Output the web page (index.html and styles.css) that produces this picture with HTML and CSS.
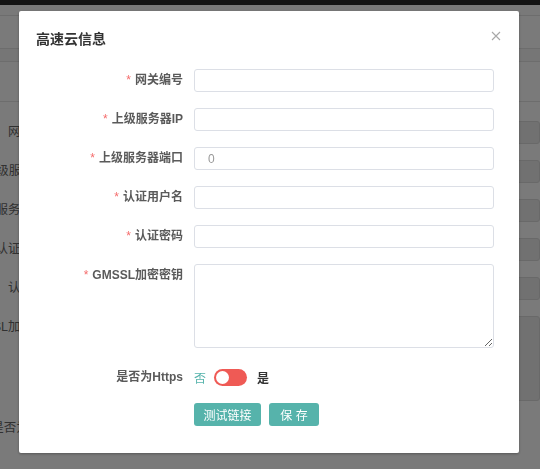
FILE: index.html
```html
<!DOCTYPE html>
<html lang="zh-CN">
<head>
    <meta charset="UTF-8">
    <meta name="viewport" content="width=device-width, initial-scale=1.0">
    <title>高速云信息</title>
    <link rel="stylesheet" href="styles.css">
</head>
<body>
    <!-- page behind the dialog -->
    <div class="page">
        <div class="topbar"></div>
        <div class="nav"></div>
        <div class="toolbar"></div>
        <div class="band"></div>
        <div class="panel-head"></div>
        <div class="bg-form">
            <div class="bg-row"><span class="bg-label"><span>网关编号</span></span><span class="bg-input"></span></div>
            <div class="bg-row"><span class="bg-label"><span>上级服务器IP</span></span><span class="bg-input"></span></div>
            <div class="bg-row"><span class="bg-label"><span>上级服务器端口</span></span><span class="bg-input"></span></div>
            <div class="bg-row"><span class="bg-label"><span>认证用户名</span></span><span class="bg-input"></span></div>
            <div class="bg-row"><span class="bg-label"><span>认证密码</span></span><span class="bg-input"></span></div>
            <div class="bg-row"><span class="bg-label"><span>GMSSL加密密钥</span></span><span class="bg-input bg-area"></span></div>
            <div class="bg-row bg-last"><span class="bg-label"><span>是否为Https</span></span></div>
        </div>
    </div>

    <div class="mask">
        <div class="dialog">
            <div class="dialog-head">
                <span class="dialog-title">高速云信息</span>
                <span class="dialog-close">
                    <svg width="10" height="10" viewBox="0 0 10 10">
                        <path d="M1 1 L9 9 M9 1 L1 9" stroke="#a8a8a8" stroke-width="1.1" fill="none"/>
                    </svg>
                </span>
            </div>
            <form class="dialog-body">
                <div class="row">
                    <label class="label required" for="gwNo">网关编号</label>
                    <input class="input" type="text" id="gwNo">
                </div>
                <div class="row">
                    <label class="label required" for="serverIp">上级服务器IP</label>
                    <input class="input" type="text" id="serverIp">
                </div>
                <div class="row">
                    <label class="label required" for="serverPort">上级服务器端口</label>
                    <input class="input" type="text" id="serverPort" placeholder="0">
                </div>
                <div class="row">
                    <label class="label required" for="authUser">认证用户名</label>
                    <input class="input" type="text" id="authUser">
                </div>
                <div class="row">
                    <label class="label required" for="authPwd">认证密码</label>
                    <input class="input" type="text" id="authPwd">
                </div>
                <div class="row">
                    <label class="label required" for="gmsslKey">GMSSL加密密钥</label>
                    <textarea class="input textarea" id="gmsslKey"></textarea>
                </div>
                <div class="row row-switch">
                    <span class="label">是否为Https</span>
                    <div class="switch-wrap">
                        <span class="switch-off">否</span>
                        <span class="switch"><span class="knob"></span></span>
                        <span class="switch-on">是</span>
                    </div>
                </div>
                <div class="row row-actions">
                    <span class="label"></span>
                    <button type="button" class="btn btn-test">测试链接</button>
                    <button type="button" class="btn btn-save">保 存</button>
                </div>
            </form>
        </div>
    </div>
</body>
</html>
```

FILE: styles.css
```css
* {
    box-sizing: border-box;
}
body {
    margin: 0;
    overflow: hidden;
    height: 469px;
    font-family: "Liberation Sans", "Noto Sans CJK SC", sans-serif;
    font-size: 12px;
    background-color: #fff;
}

/* background page */
.topbar {
    height: 5px;
    background-color: #2b2b2b;
}
.nav {
    height: 11px;
    background-color: #fdfdfd;
    border-bottom: 1px solid #e4e4e4;
}
.toolbar {
    height: 33px;
    border-bottom: 1px solid #e4e4e4;
}
.band {
    height: 13px;
    background-color: #f6f6f6;
    border-bottom: 1px solid #e4e4e4;
}
.panel-head {
    height: 40px;
    border-bottom: 1px solid #e4e4e4;
}
.bg-form {
    padding-top: 19px;
}
.bg-row {
    display: flex;
    align-items: flex-start;
    margin-bottom: 16px;
}
/* labels overflow to the left edge */
.bg-label {
    flex: 0 0 58px;
    min-width: 0;
    display: flex;
    justify-content: flex-end;
    line-height: 23px;
    color: #666;
    font-size: 12.5px;
    white-space: nowrap;
}
.bg-label span {
    flex-shrink: 0;
}
.bg-input {
    margin-left: 12px;
    width: 520px;
    height: 23px;
    background-color: #ececec;
    border: 1px solid #dcdcdc;
    border-radius: 3px;
}
.bg-area {
    height: 85px;
}
.bg-last {
    margin-top: 4px;
}

/* modal */
.mask {
    position: fixed;
    inset: 0;
    background-color: rgba(0, 0, 0, 0.52);
}
.dialog {
    width: 500px;
    height: 442px;
    margin: 11px 0 0 19px;
    background-color: #fff;
    border-radius: 2px;
    box-shadow: 0 1px 3px rgba(0, 0, 0, 0.3);
}
.dialog-head {
    display: flex;
    align-items: center;
    justify-content: space-between;
    padding: 17px 18px 0 17px;
    height: 38px;
}
.dialog-title {
    font-size: 14px;
    font-weight: 600;
    color: #333;
    line-height: 20px;
}
.dialog-close {
    display: flex;
    margin-top: -5px;
}
.dialog-body {
    padding-top: 20px;
}
.row {
    display: flex;
    align-items: flex-start;
    margin-bottom: 16px;
}
.label {
    flex: 0 0 164px;
    text-align: right;
    line-height: 23px;
    font-weight: bold;
    color: #5a5a5a;
    margin-right: 11px;
}
.required::before {
    content: "*";
    color: #f56c6c;
    margin-right: 4px;
    font-weight: normal;
}
.input {
    width: 300px;
    height: 23px;
    padding: 0 13px;
    border: 1px solid #dcdfe6;
    border-radius: 3px;
    font-family: inherit;
    font-size: 12px;
    color: #606266;
    outline: none;
}
.input::placeholder {
    color: #999;
}
.textarea {
    height: 84px;
    padding: 5px 13px;
    resize: vertical;
}
.row-switch {
    margin-top: 18px;
    margin-bottom: 14px;
}
.switch-wrap {
    display: flex;
    align-items: center;
    height: 23px;
}
.switch-off {
    color: #55b3ab;
    margin-right: 8px;
}
.switch {
    position: relative;
    width: 33px;
    height: 17px;
    border-radius: 9px;
    background-color: #ef5a55;
}
.knob {
    position: absolute;
    left: 2px;
    top: 2px;
    width: 13px;
    height: 13px;
    border-radius: 50%;
    background-color: #fff;
}
.switch-on {
    margin-left: 10px;
    font-weight: bold;
    color: #333;
}
.row-actions {
    gap: 8px;
}
.row-actions .label {
    margin-right: 3px;
}
.btn {
    height: 23px;
    padding: 0;
    border: none;
    border-radius: 3px;
    background-color: #56b3ab;
    color: #fff;
    font-family: inherit;
    font-size: 12px;
    cursor: pointer;
}
.btn-test {
    width: 67px;
}
.btn-save {
    width: 50px;
}
```
